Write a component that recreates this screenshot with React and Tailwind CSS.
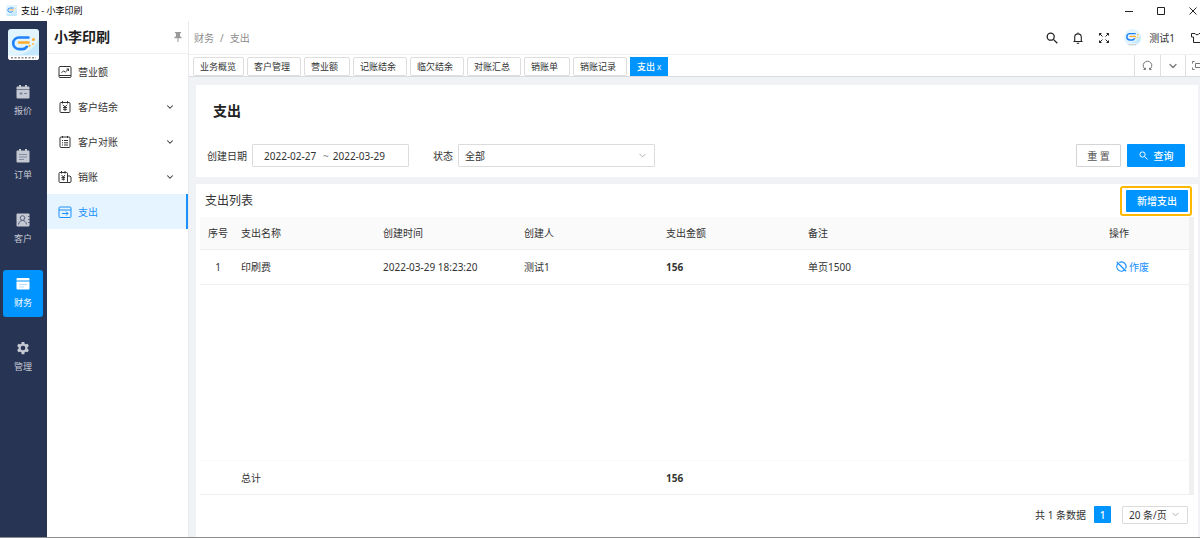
import React, { useState } from 'react';
import { ChevronDown } from 'lucide-react';

const RAIL = [
  { key: 'quote', label: '报价', icon: QuoteIcon },
  { key: 'order', label: '订单', icon: OrderIcon },
  { key: 'customer', label: '客户', icon: CustomerIcon },
  { key: 'finance', label: '财务', icon: FinanceIcon },
  { key: 'manage', label: '管理', icon: GearIcon },
];

const MENU = [
  { label: '营业额', icon: TurnoverIcon },
  { label: '客户结余', icon: BalanceIcon, group: true },
  { label: '客户对账', icon: StatementIcon, group: true },
  { label: '销账', icon: WriteOffIcon, group: true },
  { label: '支出', icon: ExpenseIcon, active: true },
];

const TABS = [
  { label: '业务概览', width: 'w-[51px]' },
  { label: '客户管理', width: 'w-[54px]' },
  { label: '营业额', width: 'w-[46px]' },
  { label: '记账结余', width: 'w-[54px]' },
  { label: '临欠结余', width: 'w-[54px]' },
  { label: '对账汇总', width: 'w-[54px]' },
  { label: '销账单', width: 'w-[46px]' },
  { label: '销账记录', width: 'w-[54px]' },
];

const ROWS = [
  { id: 1, name: '印刷费', createdAt: '2022-03-29 18:23:20', creator: '测试1', amount: 156, remark: '单页1500' },
];

export default function App() {
  return (
    <div className="flex min-h-screen flex-col overflow-hidden border-b border-[#8c8c8c] bg-white font-['Noto_Sans','Noto_Sans_CJK_SC',sans-serif] text-[10px] leading-4 text-[#333]">
      <TitleBar />
      <div className="flex flex-1">
        <Rail />
        <SideMenu />
        <main className="flex min-w-0 flex-1 flex-col border-l border-[#e9eaec] bg-[#f0f2f5]">
          <TopBar />
          <TabBar />
          <div className="flex flex-1 flex-col gap-[7px] pt-2 pr-[2px] pl-[7px]">
            <FilterPanel />
            <ExpenseList />
          </div>
        </main>
      </div>
    </div>
  );
}

function TitleBar() {
  return (
    <header className="flex h-[21px] items-center justify-between pl-[6px] text-[9px] text-black">
      <div className="flex items-center gap-1">
        <Logo className="size-[11px]" />
        <span>支出 - 小李印刷</span>
      </div>
      <div className="flex items-center gap-6 pr-[3px]">
        <button aria-label="最小化"><WinIcon d="M0 4.5h8" /></button>
        <button aria-label="最大化"><WinIcon d="M.5.5h7v7h-7z" /></button>
        <button aria-label="关闭"><WinIcon d="M.5.5l7 7M7.5.5l-7 7" /></button>
      </div>
    </header>
  );
}

function Rail() {
  return (
    <nav className="flex w-[47px] flex-none flex-col items-center bg-[#283453] pt-2 pr-px">
      <Logo className="size-[31px]" caption />
      <div className="mt-[18px] flex flex-col gap-[17px]">
        {RAIL.map(({ key, label, icon: Icon }) => (
          <a
            key={key}
            href={`#${key}`}
            className={`flex h-[47px] w-10 flex-col items-center gap-1 rounded-[3px] pt-[7px] text-[9px] ${key === 'finance' ? 'bg-[#0094ff] text-white' : 'text-[#c3c8d2]'}`}
          >
            <Icon />
            <span className="leading-4">{label}</span>
          </a>
        ))}
      </div>
    </nav>
  );
}

function SideMenu() {
  return (
    <aside className="w-[141px] flex-none">
      <div className="flex h-[33px] items-center justify-between border-b border-[#f0f0f0] pr-[6px] pl-[7px]">
        <h2 className="text-[14px] font-bold text-[#1f1f1f]">小李印刷</h2>
        <button aria-label="固定菜单" className="text-[#999]"><PinIcon /></button>
      </div>
      <ul>
        {MENU.map(({ label, icon: Icon, group, active }) => (
          <li key={label}>
            <a
              href="#menu"
              className={`flex h-[35px] items-center gap-[7px] pl-3 ${active ? 'border-r-2 border-[#1890ff] bg-[#e6f4ff] text-[#1890ff]' : 'pr-[13px]'}`}
            >
              <Icon />
              <span className="flex-1">{label}</span>
              {group && <ChevronDown size={10} strokeWidth={2.5} />}
            </a>
          </li>
        ))}
      </ul>
    </aside>
  );
}

function TopBar() {
  return (
    <div className="flex h-[34px] flex-none items-center justify-between overflow-hidden border-b border-[#f0f0f0] bg-white pl-[5px]">
      <nav className="flex gap-[6px] text-[#8c8c8c]">
        <a href="#finance">财务</a>
        <span>/</span>
        <a href="#expense">支出</a>
      </nav>
      <div className="-mr-[3px] flex items-center text-[#222]">
        <button aria-label="搜索" className="mr-[14px]"><SearchIcon className="size-3" /></button>
        <button aria-label="通知" className="mr-[14px]"><BellIcon /></button>
        <button aria-label="全屏" className="mr-[14px]"><ExpandIcon /></button>
        <button className="mr-4 flex items-center gap-2 text-[#333]">
          <Logo className="size-[17px] rounded-full" caption />
          测试1
        </button>
        <button aria-label="主题"><ShirtIcon /></button>
      </div>
    </div>
  );
}

function TabBar() {
  return (
    <div className="flex h-[22px] flex-none justify-between overflow-hidden border-b border-[#d9dbdf] bg-white pl-1 text-[9px]">
      <div className="flex gap-[3px] pt-[2px]">
        {TABS.map((t) => (
          <a key={t.label} href="#tab" className={`h-[19px] rounded-[2px] border border-[#dedede] pl-[6px] leading-[17px] whitespace-nowrap ${t.width}`}>
            {t.label}
          </a>
        ))}
        <a href="#tab" aria-current="page" className="flex h-[19px] gap-[2px] bg-[#0094ff] px-[7px] leading-[19px] whitespace-nowrap text-white">
          <b className="font-medium">支出</b>
          <span className="text-[8px]">x</span>
        </a>
      </div>
      <div className="-mr-[9px] flex text-[#777]">
        <button aria-label="刷新" className="flex w-[26px] items-center justify-center border-l border-[#dedede]"><ReloadIcon /></button>
        <button aria-label="更多" className="flex w-[25px] items-center justify-center border-l border-[#dedede]"><ChevronDown size={12} strokeWidth={2.5} /></button>
        <button aria-label="内容全屏" className="flex w-6 items-center justify-center border-l border-[#dedede]"><FrameIcon /></button>
      </div>
    </div>
  );
}

function FilterPanel() {
  const [from, setFrom] = useState('2022-02-27');
  const [to, setTo] = useState('2022-03-29');

  return (
    <section className="bg-white pt-4 pb-[10px]">
      <h1 className="pl-[17px] text-[14px] leading-5 font-bold text-[#222]">支出</h1>
      <form className="mt-[23px] flex items-center pr-[13px] pl-[11px]" onSubmit={(e) => e.preventDefault()}>
        <label htmlFor="from" className="mr-[5px]">创建日期</label>
        <div className="flex h-[23px] w-[157px] items-center gap-1 rounded-[1px] border border-[#dcdcdc] pl-[11px]">
          <input id="from" className="w-[55px] outline-none" value={from} onChange={(e) => setFrom(e.target.value)} />
          <span className="text-[#888]">~</span>
          <input aria-label="结束日期" className="w-[56px] outline-none" value={to} onChange={(e) => setTo(e.target.value)} />
        </div>
        <label htmlFor="status" className="mr-[5px] ml-6">状态</label>
        <Select id="status" className="h-[23px] w-[197px]" options={['全部', '正常', '已作废']} />
        <button type="reset" className="ml-auto h-[23px] w-[45px] rounded-[1px] border border-[#d4d4d4] text-[#555]">重 置</button>
        <button type="submit" className="ml-[6px] flex h-[23px] w-[58px] items-center justify-center gap-[6px] rounded-[1px] bg-[#0094ff] font-medium text-white">
          <SearchIcon className="size-[9px]" />
          查询
        </button>
      </form>
    </section>
  );
}

function Cols() {
  return (
    <colgroup>
      <col className="w-9" />
      <col className="w-[142px]" />
      <col className="w-[141px]" />
      <col className="w-[142px]" />
      <col className="w-[142px]" />
      <col />
      <col className="w-[85px]" />
    </colgroup>
  );
}

function ExpenseList() {
  const total = ROWS.reduce((sum, r) => sum + r.amount, 0);

  return (
    <section className="flex flex-1 flex-col bg-white">
      <div className="flex h-[33px] items-center justify-between pr-[6px] pl-[9px]">
        <h2 className="text-[12px]">支出列表</h2>
        <div className="rounded-[3px] border-2 border-[#ffb800] py-[2px] pr-[2px] pl-1">
          <button className="block h-[22px] w-[62px] rounded-[1px] bg-[#0094ff] font-medium text-white">新增支出</button>
        </div>
      </div>

      <div className="mr-1 ml-1 flex flex-1">
        <div className="flex min-w-0 flex-1 flex-col justify-between">
          <table className="w-full table-fixed text-left">
            <Cols />
            <thead>
              <tr className="h-8 border-b border-[#eee] bg-[#fafafa]">
                <th className="text-center font-normal">序号</th>
                <th className="pl-[5px] font-normal">支出名称</th>
                <th className="pl-[5px] font-normal">创建时间</th>
                <th className="pl-[5px] font-normal">创建人</th>
                <th className="pl-[5px] font-normal">支出金额</th>
                <th className="pl-[5px] font-normal">备注</th>
                <th className="pl-[5px] font-normal">操作</th>
              </tr>
            </thead>
            <tbody>
              {ROWS.map((r) => (
                <tr key={r.id} className="h-[35px] border-b border-[#f0f0f0]">
                  <td className="text-center">{r.id}</td>
                  <td className="pl-[5px]">{r.name}</td>
                  <td className="pl-[5px]">{r.createdAt}</td>
                  <td className="pl-[5px]">{r.creator}</td>
                  <td className="pl-[5px] font-bold">{r.amount}</td>
                  <td className="pl-[5px]">{r.remark}</td>
                  <td className="pl-3">
                    <button className="flex items-center gap-[2px] text-[#1890ff]">
                      <VoidIcon />
                      作废
                    </button>
                  </td>
                </tr>
              ))}
            </tbody>
          </table>
          <table className="w-full table-fixed text-left">
            <Cols />
            <tfoot>
              <tr className="h-[34px] border-t border-b border-t-[#fafafa] border-b-[#eee]">
                <td />
                <td className="pl-[5px]">总计</td>
                <td />
                <td />
                <td className="pl-[5px] font-bold">{total}</td>
                <td />
                <td />
              </tr>
            </tfoot>
          </table>
        </div>
        <div className="w-[5px] flex-none bg-[#f0f0f0]" />
      </div>

      <div className="flex h-[42px] items-center justify-end pr-[10px] pb-[3px]">
        <span>共 {ROWS.length} 条数据</span>
        <button aria-current="page" className="ml-2 size-[17px] rounded-[1px] bg-[#0094ff] font-medium text-white">1</button>
        <Select aria-label="每页条数" className="ml-[11px] h-[18px] w-[66px]" options={['20 条/页', '50 条/页', '100 条/页']} />
      </div>
    </section>
  );
}

function Select({ options, className, ...rest }) {
  return (
    <div className={`relative flex items-center rounded-[1px] border border-[#dcdcdc] pl-[6px] ${className}`}>
      <select className="w-full appearance-none bg-transparent outline-none" {...rest}>
        {options.map((o) => <option key={o}>{o}</option>)}
      </select>
      <ChevronDown size={11} strokeWidth={2} className="pointer-events-none absolute right-[6px] text-[#aaa]" />
    </div>
  );
}

/* ---------- icons ---------- */

function WinIcon({ d }) {
  return (
    <svg width="8" height="8" viewBox="0 0 8 8" fill="none" stroke="#222" strokeWidth="1"><path d={d} /></svg>
  );
}

function Logo({ className, caption }) {
  return (
    <svg viewBox="0 0 31 31" className={`flex-none ${className}`}>
      <rect width="31" height="31" rx="3" fill="#e2f5ff" />
      <path d="M2 26C14 27 25 22 31 10v18a3 3 0 0 1-3 3H3z" fill="#c4e9ff" />
      {caption && <path d="M0 26.500h31V28a3 3 0 0 1-3 3H3a3 3 0 0 1-3-3z" fill="#fff" />}
      {caption && <path d="M3 28.700h25" stroke="#8a8a8a" strokeWidth="1.500" strokeDasharray="2 1.500" />}
      <path d="M20.500 8.500H11a5.800 5.800 0 0 0 0 11.600h3.500c2 0 3.300-.8 4.300-2.300" fill="none" stroke="#1f80fa" strokeWidth="2.600" strokeLinecap="round" />
      <path d="M11 13.500h9.500" stroke="#ffab2b" strokeWidth="2.400" strokeLinecap="round" />
      <circle cx="21.500" cy="16.800" r="1.100" fill="#ffab2b" />
      <circle cx="25.500" cy="10.500" r="1.500" fill="#ffab2b" />
      <circle cx="25" cy="15" r="1.100" fill="#ffc04d" />
    </svg>
  );
}

function QuoteIcon() {
  return (
    <svg width="14" height="14" viewBox="0 0 14 14" className="flex-none">
      <path d="M1.500 1.500h11a1 1 0 0 1 1 1V4H.5V2.500a1 1 0 0 1 1-1zM3 0h2v3H3zM9 0h2v3H9z" fill="currentColor" />
      <path d="M.5 4.500h13v8a1 1 0 0 1-1 1h-11a1 1 0 0 1-1-1z" fill="currentColor" />
      <path d="M3.500 8.500h3M5 7v3M8 8.500h3" stroke="#7a839a" strokeWidth="1" />
    </svg>
  );
}

function OrderIcon() {
  return (
    <svg width="14" height="14" viewBox="0 0 14 14" className="flex-none">
      <rect x=".5" y="1.500" width="13" height="12" rx="1" fill="currentColor" />
      <path d="M3 0h2v3H3zM9 0h2v3H9z" fill="currentColor" />
      <path d="M3 5.500h8M3 8h8M3 10.500h5" stroke="#838ca2" strokeWidth="1" />
    </svg>
  );
}

function CustomerIcon() {
  return (
    <svg width="14" height="14" viewBox="0 0 14 14" className="flex-none">
      <rect x=".5" y=".5" width="13" height="13" rx="1" fill="currentColor" />
      <g fill="none" stroke="#5a6480" strokeWidth="1">
        <circle cx="6.500" cy="5" r="2.300" />
        <path d="M2.500 11.500c.3-2.600 2-4 4-4s3.700 1.400 4 4M12 3.500h2M12 6.500h2M12 9.500h2" />
      </g>
    </svg>
  );
}

function FinanceIcon() {
  return (
    <svg width="14" height="14" viewBox="0 0 14 14" className="flex-none">
      <path d="M1.500 1h11a1 1 0 0 1 1 1v1.500H.5V2a1 1 0 0 1 1-1zM.5 4.500h13v7a1 1 0 0 1-1 1h-11a1 1 0 0 1-1-1z" fill="currentColor" />
      <path d="M3 7.500h8M3 10h5" stroke="#b5deff" strokeWidth="1" />
    </svg>
  );
}

function GearIcon() {
  return (
    <svg width="14" height="14" viewBox="0 0 24 24" className="flex-none" fill="currentColor">
      <path d="M9.700 1.500h4.600l.6 3.100 1.900 1.100 3-1.100 2.300 4-2.400 2.100v2.600l2.400 2.100-2.300 4-3-1.100-1.900 1.100-.6 3.100H9.700l-.6-3.100-1.900-1.100-3 1.100-2.300-4 2.400-2.100v-2.600L1.900 8.600l2.300-4 3 1.100 1.900-1.100zM12 8a4 4 0 1 0 0 8 4 4 0 0 0 0-8z" fillRule="evenodd" />
    </svg>
  );
}

function PinIcon() {
  return (
    <svg width="8" height="10" viewBox="0 0 8 10" fill="currentColor">
      <path d="M1 0h6v1.200H6V4.300L7.500 5v1.300h-3V10h-1V6.300h-3V5L2 4.300V1.200H1z" />
    </svg>
  );
}

function MenuIcon({ children }) {
  return (
    <svg width="12" height="12" viewBox="0 0 12 12" className="flex-none overflow-visible" fill="none" stroke="currentColor" strokeWidth="1">
      {children}
    </svg>
  );
}

function TurnoverIcon() {
  return (
    <MenuIcon>
      <rect x="0" y=".5" width="12" height="11" rx="1" />
      <path d="M0 9.500h12M2.500 6.800l2-2 1.800 1.400L9.500 3M7.500 3h2v2" />
    </MenuIcon>
  );
}

function BalanceIcon() {
  return (
    <MenuIcon>
      <rect x="1" y="1.500" width="10" height="10" rx="1" />
      <path d="M3.500 0v2.500M8.500 0v2.500M4 3.800l2 2.200 2-2.200M6 6v4M4 6.500h4M4 8.300h4" />
    </MenuIcon>
  );
}

function StatementIcon() {
  return (
    <MenuIcon>
      <rect x="1" y="1" width="10" height="10.500" rx="1" />
      <path d="M3.500 0v2M8.500 0v2M3 4.500h1M5 4.500h4M3 6.800h1M5 6.800h4M3 9h1M5 9h4" />
    </MenuIcon>
  );
}

function WriteOffIcon() {
  return (
    <MenuIcon>
      <rect x="0" y="1.500" width="8.500" height="10" rx="1" />
      <path d="M2.500 0v2.500M6 0v2.500M2.500 4l1.800 2 1.800-2M4.300 6v3.500M2.500 6.500H6M2.500 8.200H6M8.500 5h2.500l1 1v4.500a1 1 0 0 1-1 1H7.500" />
    </MenuIcon>
  );
}

function ExpenseIcon() {
  return (
    <MenuIcon>
      <rect x="0" y="1" width="12" height="10.500" rx="1" />
      <path d="M0 4h12M3 7.500h6M7 5.500l2 2-2 2" />
    </MenuIcon>
  );
}

function SearchIcon({ className }) {
  return (
    <svg viewBox="0 0 12 12" className={className} fill="none" stroke="currentColor" strokeWidth="1.300">
      <circle cx="4.700" cy="4.700" r="3.500" />
      <path d="M7.400 7.400l3.900 3.900" />
    </svg>
  );
}

function BellIcon() {
  return (
    <svg width="12" height="12" viewBox="0 0 12 12" fill="none" stroke="currentColor" strokeWidth="1.100">
      <path d="M1.500 9.500h9M2.700 9.500V5.200a3.300 3.300 0 0 1 6.600 0v4.300M6 .5v1.500M4.800 11.300h2.400" />
    </svg>
  );
}

function ExpandIcon() {
  return (
    <svg width="12" height="12" viewBox="0 0 12 12" fill="none" stroke="currentColor" strokeWidth="1">
      <path d="M1.500 3.500v-2h2M8.500 1.500h2v2M10.500 8.500v2h-2M3.500 10.500h-2v-2M1.500 1.500l3 3M10.500 1.500l-3 3M10.500 10.500l-3-3M1.500 10.500l3-3" />
    </svg>
  );
}

function ShirtIcon() {
  return (
    <svg width="12" height="12" viewBox="0 0 12 12" fill="none" stroke="currentColor" strokeWidth="1">
      <path d="M4 1.500c.4 1.700 3.600 1.700 4 0h3.500V5h-2v5.500h-7V5h-2V1.500z" strokeLinejoin="round" />
    </svg>
  );
}

function ReloadIcon() {
  return (
    <svg width="11" height="11" viewBox="0 0 11 11" fill="none" stroke="currentColor" strokeWidth="1">
      <path d="M3.300 9.200a4.300 4.300 0 1 1 4.400 0M1.500 9.500h2V7.800M9.500 9.500h-2V7.800" />
    </svg>
  );
}

function FrameIcon() {
  return (
    <svg width="11" height="11" viewBox="0 0 11 11" className="flex-none" fill="none" stroke="currentColor" strokeWidth="1">
      <path d="M3.500 3.500h6v4h-6zM.5 3.500v-2h2M9 1.500h2M11 9.500H9M2.500 9.500h-2v-2" />
    </svg>
  );
}

function VoidIcon() {
  return (
    <svg width="11" height="11" viewBox="0 0 11 11" fill="none" stroke="currentColor" strokeWidth="1.200">
      <path d="M3.300 1.600a4.500 4.500 0 0 1 6.200 6M8.300 9a4.500 4.500 0 0 1-6.400-6.300M.8 1l9.400 9.200" />
    </svg>
  );
}
